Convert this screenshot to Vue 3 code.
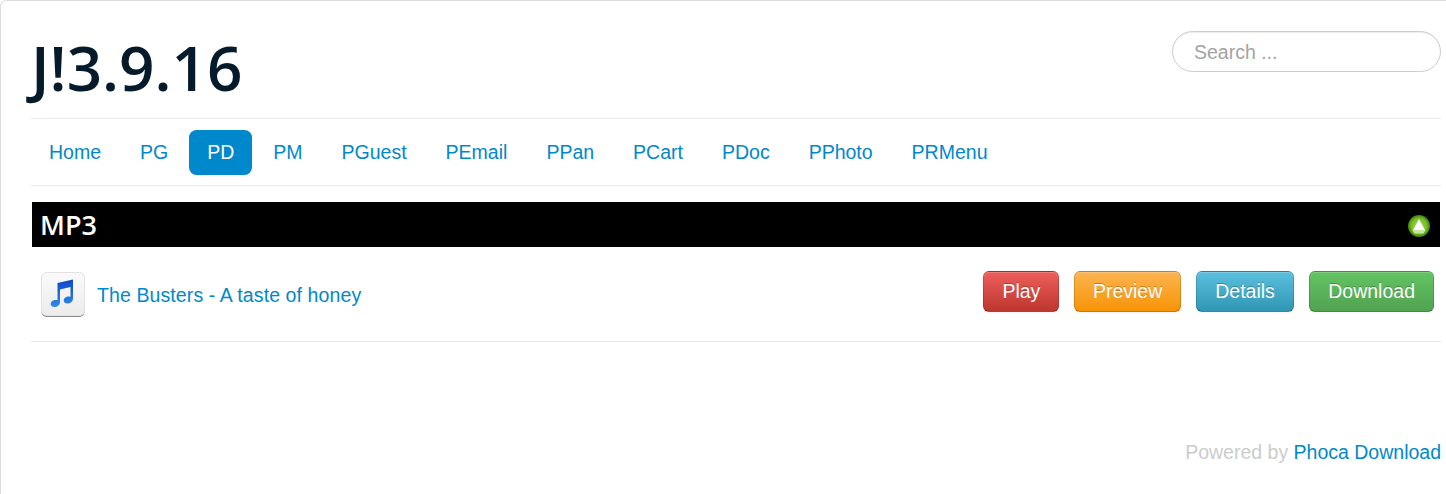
<template>
  <div class="page">
    <header class="header">
      <h1 class="brand">J!3.9.16</h1>
      <input class="search" type="text" placeholder="Search ..." />
    </header>

    <nav class="nav">
      <a v-for="item in menu" :key="item" href="#" :class="{ active: item === 'PD' }">{{ item }}</a>
    </nav>

    <div class="category">
      <h3>MP3</h3>
      <svg class="toggle" width="24" height="24" viewBox="0 0 24 24">
        <defs>
          <radialGradient id="ball" cx="50%" cy="50%" r="50%">
            <stop offset="0%" stop-color="#a6dc5e" />
            <stop offset="70%" stop-color="#76bd22" />
            <stop offset="100%" stop-color="#3f7f10" />
          </radialGradient>
        </defs>
        <circle cx="12" cy="12" r="11" fill="url(#ball)" />
        <path d="M5.5 16 H18.5 L16.5 19.5 H7.5 Z" fill="#c6e69a" />
        <path d="M12 5 L18 16 H6 Z" fill="#fff" />
      </svg>
    </div>

    <div class="file-row">
      <div class="file-name">
        <svg class="file-icon" width="46" height="47" viewBox="0 0 46 47">
          <defs>
            <linearGradient id="tile" x1="0" y1="0" x2="0" y2="1">
              <stop offset="0%" stop-color="#fafafa" />
              <stop offset="100%" stop-color="#ececec" />
            </linearGradient>
            <linearGradient id="note" x1="0" y1="0" x2="0" y2="1">
              <stop offset="0%" stop-color="#0f45c8" />
              <stop offset="100%" stop-color="#2f8be8" />
            </linearGradient>
          </defs>
          <rect x="1.5" y="3" width="43" height="43" rx="5" fill="#8a8a8a" />
          <rect x="1.5" y="1.5" width="43" height="43" rx="5" fill="url(#tile)" stroke="#e2e2e2" />
          <path
            d="M17.5 12 L33 8.5 V27.5 C33 30.5 30.2 32.5 27.5 32.5 C25.2 32.5 23.7 31.2 23.7 29.4 C23.7 27 26.2 25.4 28.6 25.4 C29.3 25.4 29.9 25.5 30.5 25.8 V16 L20 18.4 V31 C20 34 17.2 36 14.5 36 C12.2 36 10.7 34.7 10.7 32.9 C10.7 30.5 13.2 28.9 15.6 28.9 C16.3 28.9 16.9 29 17.5 29.3 Z"
            fill="url(#note)"
          />
        </svg>
        <a href="#">The Busters - A taste of honey</a>
      </div>
      <div class="buttons">
        <a v-for="b in buttons" :key="b.label" href="#" class="btn" :class="b.kind">{{ b.label }}</a>
      </div>
    </div>

    <footer class="footer">Powered by <a href="#">Phoca Download</a></footer>
  </div>
</template>

<script setup>
const menu = ["Home", "PG", "PD", "PM", "PGuest", "PEmail", "PPan", "PCart", "PDoc", "PPhoto", "PRMenu"];
const buttons = [
  { label: "Play", kind: "danger" },
  { label: "Preview", kind: "warning" },
  { label: "Details", kind: "info" },
  { label: "Download", kind: "success" },
];
</script>

<style>
html,
body {
  margin: 0;
  overflow: hidden;
  background: #fff;
}
</style>

<style scoped>
.page {
  box-sizing: border-box;
  width: 1446px;
  height: 494px;
  padding: 0 5px 0 30px;
  border-top: 1px solid #ddd;
  border-left: 1px solid #ddd;
  border-top-left-radius: 6px;
  font-family: "Liberation Sans", Arial, sans-serif;
  font-size: 19.5px;
  line-height: 27px;
  color: #333;
}
a {
  color: #0088cc;
  text-decoration: none;
}
.header {
  display: flex;
  justify-content: space-between;
  align-items: flex-start;
  height: 117px;
  border-bottom: 1px solid #e9e9e9;
}
.brand {
  margin: 27px 0 0;
  font-family: "Open Sans", sans-serif;
  font-size: 62px;
  font-weight: 600;
  line-height: 78px;
  color: #051b2b;
}
.search {
  box-sizing: border-box;
  width: 269px;
  height: 41px;
  margin-top: 30px;
  padding: 2px 21px 0;
  border: 1px solid #ccc;
  border-radius: 21px;
  box-shadow: inset 0 1px 1px rgba(0, 0, 0, 0.075);
  font-family: inherit;
  font-size: 19.5px;
  outline: none;
}
.search::placeholder {
  color: #a3a3a3;
}
.nav {
  display: flex;
  gap: 3px;
  height: 67px;
  padding-top: 11px;
  box-sizing: border-box;
  border-bottom: 1px solid #e9e9e9;
}
.nav a {
  height: 45px;
  padding: 9px 18px;
  box-sizing: border-box;
  border-radius: 7.5px;
}
.nav a.active {
  background: #0088cc;
  color: #fff;
}
.category {
  display: flex;
  justify-content: space-between;
  align-items: center;
  height: 45px;
  margin: 16px 1px 0;
  padding: 0 9px 0 8px;
  background: #000;
}
.category h3 {
  margin: 0;
  padding-top: 1px;
  font-family: "Open Sans", sans-serif;
  font-size: 27px;
  font-weight: 600;
  line-height: 44px;
  color: #fff;
}
.toggle {
  margin-top: 2px;
  filter: blur(0.4px);
}
.file-row {
  display: flex;
  justify-content: space-between;
  align-items: flex-start;
  height: 95px;
  box-sizing: border-box;
  padding: 24px 7px 0 9px;
  border-bottom: 1px solid #e9e9e9;
}
.file-name {
  display: flex;
  align-items: center;
  gap: 11px;
  height: 47px;
}
.file-name a {
  padding-top: 2px;
  letter-spacing: 0.1px;
}
.file-icon {
  filter: blur(0.4px);
}
.buttons {
  display: flex;
  gap: 15px;
}
.btn {
  box-sizing: border-box;
  height: 41px;
  padding: 6px 18px;
  border: 1px solid rgba(0, 0, 0, 0.15);
  border-bottom-color: rgba(0, 0, 0, 0.3);
  border-radius: 6px;
  color: #fff;
  text-shadow: 0 -1px 0 rgba(0, 0, 0, 0.25);
  box-shadow: inset 0 1px 0 rgba(255, 255, 255, 0.2), 0 1px 2px rgba(0, 0, 0, 0.05);
}
.danger {
  background-image: linear-gradient(#ee5f5b, #bd362f);
}
.warning {
  padding: 6px 17.6px;
  background-image: linear-gradient(#fbb450, #f89406);
}
.info {
  padding: 6px 18.4px;
  background-image: linear-gradient(#5bc0de, #2f96b4);
}
.success {
  background-image: linear-gradient(#62c462, #51a351);
}
.footer {
  margin-top: 97px;
  text-align: right;
  color: #ccc;
}
</style>
